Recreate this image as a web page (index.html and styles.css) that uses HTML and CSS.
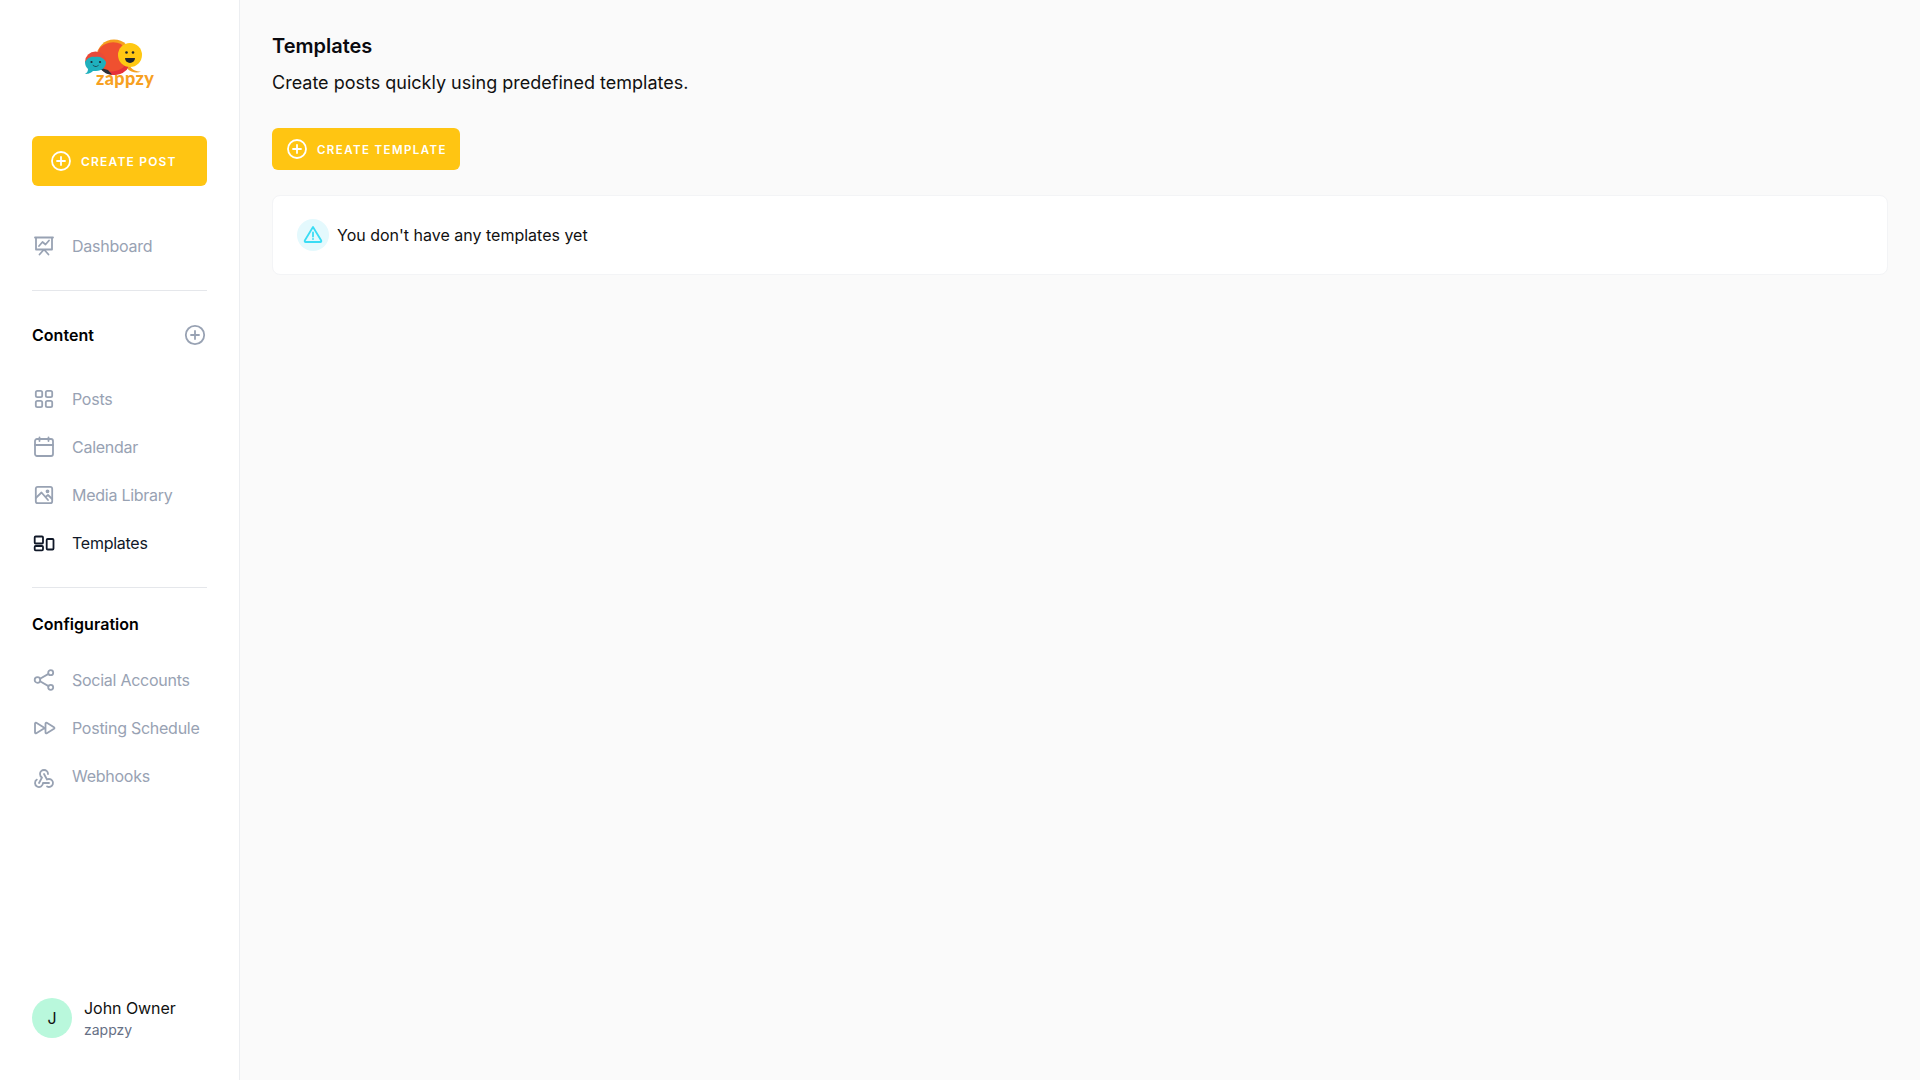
FILE: index.html
```html
<!DOCTYPE html>
<html lang="en">
<head>
<meta charset="utf-8">
<title>Templates</title>
<link rel="stylesheet" href="styles.css">
</head>
<body>
<div class="app">
<aside class="sidebar">
  <div class="logo">
    <svg width="80" height="52" viewBox="0 0 80 52">
      <circle cx="37" cy="19" r="17.500" fill="#f5a01f"/>
      <path d="M22 11a18 18 0 0 1 22-5c6 6 8 16 5 25a18 18 0 0 1-17 5C22 33 18 21 22 11z" fill="#ef5030"/>
      <path d="M25 32c8 3 19 2 24-6l3 3a18 18 0 0 1-14 8c-6 0-9-2-13-5z" fill="#e6303a"/>
      <path d="M24 30l7 2 4 4.500c-5 0-8-2-11-5z" fill="#2b3038"/>
      <path d="M53 28c2 4 6 5.500 11 5.500-4 2-10 1-14-3z" fill="#f5a01f"/>
      <circle cx="53" cy="17" r="12" fill="#ffc812"/>
      <path d="M63 12a12 12 0 0 1-9 17 12 12 0 0 0 9-17z" fill="#f5a01f"/>
      <circle cx="49.500" cy="14.500" r="1.300" fill="#1d2530"/>
      <circle cx="56" cy="14.500" r="1.300" fill="#1d2530"/>
      <path d="M48 20h10a5 5 0 0 1-10 0z" fill="#1d2530"/>
      <path d="M8 24a10.500 10.500 0 0 1 21 0z" fill="#e94a3a"/>
      <path d="M8 24c2-3 5-6 10-5 5-1 9 1 11 5 0 5-4 9-10 9h-3c-3 3-7 3-8 3 2-1 3-3 3-5-2-2-3-4-3-7z" fill="#1fb0bd"/>
      <circle cx="14.500" cy="24" r="1.100" fill="#1d2530"/>
      <circle cx="23" cy="24" r="1.100" fill="#1d2530"/>
      <path d="M15.500 26.500c2 2 4.500 2 6.500 0-1 3-5.500 3-6.500 0z" fill="#1d2530"/>
      <text x="19" y="47" class="logo-word">zappzy</text>
    </svg>
  </div>
  <a class="btn btn-post">
    <svg class="btn-icon" viewBox="0 0 20 20"><circle cx="10" cy="10" r="9"/><path d="M10 6v8M6 10h8"/></svg>
    <span>CREATE POST</span>
  </a>
  <nav class="nav">
    <a class="nav-item">
      <svg class="ico" viewBox="0 0 24 24"><path d="M3 3.500h18M4 3.500v12h16v-12M7 12l3.500-4 3 2.500L17 6.500M12 15.500l-4.500 5M12 15.500l4.500 5"/></svg>
      <span>Dashboard</span>
    </a>
  </nav>
  <hr class="rule">
  <div class="section-head section-content">
    <span>Content</span>
    <svg class="ico" viewBox="0 0 24 24"><circle cx="12" cy="12" r="9.200"/><path d="M12 8v8M8 12h8"/></svg>
  </div>
  <nav class="nav">
    <a class="nav-item">
      <svg class="ico" viewBox="0 0 24 24"><rect x="3.800" y="3.800" width="6.400" height="6.400" rx="1.600"/><rect x="13.800" y="3.800" width="6.400" height="6.400" rx="1.600"/><rect x="3.800" y="13.800" width="6.400" height="6.400" rx="1.600"/><rect x="13.800" y="13.800" width="6.400" height="6.400" rx="1.600"/></svg>
      <span>Posts</span>
    </a>
    <a class="nav-item">
      <svg class="ico" viewBox="0 0 24 24"><rect x="3" y="4" width="18" height="17" rx="2"/><path d="M3 10h18M7.500 2.500v3.500M16.500 2.500v3.500"/></svg>
      <span>Calendar</span>
    </a>
    <a class="nav-item">
      <svg class="ico" viewBox="0 0 24 24"><rect x="3.800" y="3.800" width="16.400" height="16.400" rx="2"/><path d="M3.800 15l5.700-5.500 6.500 7.500M13.500 14l2.500-2 4.200 4"/><circle cx="15.500" cy="8.300" r="1"/></svg>
      <span>Media Library</span>
    </a>
    <a class="nav-item active">
      <svg class="ico" viewBox="0 0 24 24"><rect x="2.700" y="5.500" width="8.300" height="7" rx="1"/><rect x="2.700" y="15" width="8.300" height="4.300" rx="1"/><rect x="14.700" y="8" width="6.800" height="10.500" rx="1"/></svg>
      <span>Templates</span>
    </a>
  </nav>
  <hr class="rule">
  <div class="section-head section-config"><span>Configuration</span></div>
  <nav class="nav">
    <a class="nav-item">
      <svg class="ico" viewBox="0 0 24 24"><circle cx="5.500" cy="12" r="2.800"/><circle cx="18.700" cy="4.700" r="2.500"/><circle cx="18.700" cy="19.300" r="2.500"/><path d="M8 10.700l8.500-4.800M8 13.300l8.500 4.800"/></svg>
      <span>Social Accounts</span>
    </a>
    <a class="nav-item">
      <svg class="ico" viewBox="0 0 24 24"><path d="M3 7.500v9c0 .8.700 1.100 1.300.8l7.200-4.500c.6-.4.6-1.200 0-1.600L4.300 6.700c-.6-.3-1.300 0-1.300.8zM13.500 7.500c0-.8.700-1.100 1.300-.8l7.200 4.500c.6.400.6 1.200 0 1.600l-7.200 4.500c-.6.300-1.300 0-1.300-.8z"/></svg>
      <span>Posting Schedule</span>
    </a>
    <a class="nav-item">
      <svg class="ico ico-webhook" viewBox="0 0 24 24"><path d="M4.876 13.610a4 4 0 1 0 6.124 3.390h6"/><path d="M15.066 20.502a4 4 0 1 0 1.934-7.502c-.706 0-1.424.179-2 .500l-3-5.500"/><path d="M16 8a4 4 0 1 0-8 0c0 1.506.770 2.818 2 3.500l-3 5.500"/></svg>
      <span>Webhooks</span>
    </a>
  </nav>
  <div class="user">
    <div class="avatar">J</div>
    <div class="user-text">
      <div class="user-name">John Owner</div>
      <div class="user-org">zappzy</div>
    </div>
  </div>
</aside>
<main class="main">
  <h1 class="title">Templates</h1>
  <p class="subtitle">Create posts quickly using predefined templates.</p>
  <a class="btn btn-template">
    <svg class="btn-icon" viewBox="0 0 20 20"><circle cx="10" cy="10" r="9"/><path d="M10 6v8M6 10h8"/></svg>
    <span class="btn-label">CREATE TEMPLATE</span>
  </a>
  <section class="card">
    <div class="alert-icon">
      <svg viewBox="0 0 20 20"><path d="M10 2L1.800 15.500a1 1 0 0 0 .8 1.500h14.800a1 1 0 0 0 .8-1.500z"/><path d="M10 7.500v4M10 14v.1"/></svg>
    </div>
    <span>You don't have any templates yet</span>
  </section>
</main>
</div>
</body>
</html>
```
FILE: styles.css
```css
* { box-sizing: border-box; }
html, body { margin: 0; height: 100%; }
body { font-family: Inter, "Liberation Sans", sans-serif; color: #0a0a0f; background: #fafafa; }
.app { display: flex; height: 1080px; overflow: hidden; }

.sidebar { width: 240px; flex: none; display: flex; flex-direction: column; background: #fff; border-right: 1px solid #eceef1; padding: 38px 32px 0; }
.logo { height: 52px; margin: 0 0 46px 45px; }
.logo svg { display: block; }
.logo-word { font: 900 18px Lato, sans-serif; fill: #f7a021; letter-spacing: .4px; }

.btn { display: flex; align-items: center; background: #ffc512; color: #fff; border-radius: 6px; font-weight: 600; text-transform: uppercase; }
.btn-post { height: 50px; padding-left: 19px; gap: 10px; font-size: 12px; letter-spacing: 1.200px; margin-bottom: 44px; }
.btn-template { width: 188px; height: 42px; padding-left: 15px; gap: 10px; font-size: 11.500px; letter-spacing: 1.400px; margin-bottom: 25px; }
.btn-label { padding-top: 1px; }
.btn-icon { width: 20px; height: 20px; fill: none; stroke: #fff; stroke-width: 1.800; stroke-linecap: round; flex: none; }

.nav { display: flex; flex-direction: column; gap: 16px; }
.nav-item { display: flex; align-items: center; gap: 16px; height: 32px; font-size: 16px; color: #98a2b3; letter-spacing: -.26px; }
.nav-item.active { color: #101828; }
.ico { width: 24px; height: 24px; flex: none; fill: none; stroke: #98a2b3; stroke-width: 1.800; stroke-linecap: round; stroke-linejoin: round; }
.ico-webhook { transform: translateY(2px); }
.nav-item.active .ico { stroke: #101828; }

.rule { width: 100%; height: 1px; margin: 28px 0 0; border: 0; background: #e5e7eb; flex: none; }
.section-head { display: flex; align-items: center; justify-content: space-between; font-size: 16px; font-weight: 600; color: #000; height: 24px; letter-spacing: .04px; }
.section-content { margin: 32px 0 36px; }
.section-config { margin: 24px 0 28px; }

.user { margin-top: auto; margin-bottom: 40px; display: flex; align-items: center; gap: 12px; }
.avatar { width: 40px; height: 40px; border-radius: 50%; background: #b9f8dc; display: flex; align-items: center; justify-content: center; font-size: 16px; color: #111; flex: none; }
.user-name { font-size: 16px; line-height: 24px; color: #111; letter-spacing: -.05px; }
.user-org { font-size: 14px; line-height: 20px; color: #667085; }

.main { flex: 1; padding: 32px 32px 0; min-width: 0; }
.title { font-size: 20px; line-height: 28px; font-weight: 600; margin: 0 0 9px; color: #0a0a0f; }
.subtitle { font-size: 18px; line-height: 28px; margin: 0 0 31px; color: #111; }
.card { height: 80px; background: #fff; border: 1px solid #f3f4f6; border-radius: 8px; display: flex; align-items: center; padding-left: 24px; gap: 8px; font-size: 16px; color: #111; }
.alert-icon { width: 32px; height: 32px; border-radius: 50%; background: #e4f9fd; display: flex; align-items: center; justify-content: center; }
.alert-icon svg { width: 20px; height: 20px; fill: none; stroke: #3adcf4; stroke-width: 1.800; stroke-linecap: round; stroke-linejoin: round; }
```
